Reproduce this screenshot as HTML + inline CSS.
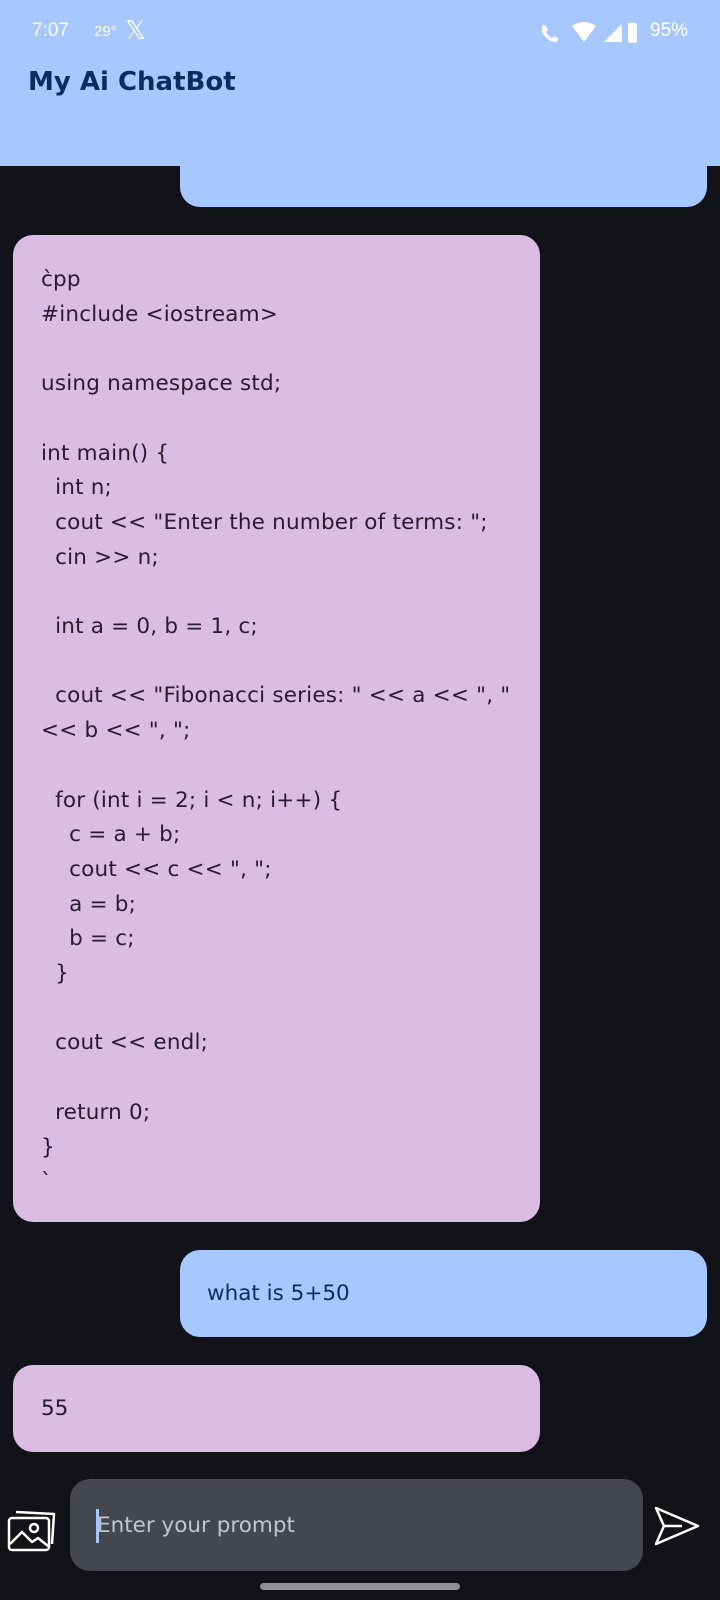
<!DOCTYPE html>
<html><head><meta charset="utf-8"><style>
*{margin:0;padding:0;box-sizing:border-box}
body{width:720px;height:1600px;background:#121318;position:relative;overflow:hidden;font-family:"DejaVu Sans",sans-serif}
.hdr{position:absolute;left:0;top:0;width:720px;height:166px;background:#a6c8ff;z-index:2}
.st{position:absolute;top:20px;font-size:19px;color:#fff;font-family:"Liberation Sans",sans-serif}
.title{position:absolute;left:28px;top:67px;font-size:26px;font-weight:bold;color:#0a2e5c}
.ub{position:absolute;left:180px;width:527px;background:#a6c8ff;border-radius:20px}
.bb{position:absolute;left:13px;width:527px;background:#dbbce2;border-radius:20px}
pre{font-family:"DejaVu Sans",sans-serif;font-size:21.5px;line-height:34.7px;color:#2a1a30;white-space:pre;letter-spacing:0.2px}
</style></head><body>
<div class="hdr">
 <div class="st" style="left:32px">7:07</div>
 <div class="st" style="left:94px;font-size:15px;top:23px">29°</div>
 <div class="st" style="left:125px;font-size:26px;top:15px">𝕏</div>
 <svg style="position:absolute;left:538px;top:20px" width="110" height="26" viewBox="0 0 110 26">
  <path d="M4 6 q2 -2 4 0 l2 4 -2 2 q2 4 6 6 l2 -2 4 2 q1 3 -2 4 q-8 0 -14 -10 z" fill="#fff"/>
  <path d="M34 6 q12 -8 24 0 l-12 16z" fill="#fff"/>
  <path d="M66 22 L84 4 L84 22z" fill="#fff"/>
  <rect x="90" y="3" width="9" height="20" rx="2" fill="#fff"/>
 </svg>
 <div class="st" style="left:650px">95%</div>
 <div class="title">My Ai ChatBot</div>
</div>
<div class="ub" style="top:120px;height:87px"></div>
<div class="bb" style="top:235px;height:987px;padding-top:28px;padding-left:28px">
<pre>c̀pp
#include &lt;iostream&gt;

using namespace std;

int main() {
  int n;
  cout &lt;&lt; "Enter the number of terms: ";
  cin &gt;&gt; n;

  int a = 0, b = 1, c;

  cout &lt;&lt; "Fibonacci series: " &lt;&lt; a &lt;&lt; ", "
&lt;&lt; b &lt;&lt; ", ";

  for (int i = 2; i &lt; n; i++) {
    c = a + b;
    cout &lt;&lt; c &lt;&lt; ", ";
    a = b;
    b = c;
  }

  cout &lt;&lt; endl;

  return 0;
}
`</pre></div>
<div class="ub" style="top:1250px;height:87px"><div style="position:absolute;left:27px;top:31px;font-size:21.5px;color:#0a2e5c">what is 5+50</div></div>
<div class="bb" style="top:1365px;height:87px"><div style="position:absolute;left:28px;top:31px;font-size:21.5px;color:#2a1a30">55</div></div>
<div style="position:absolute;left:70px;top:1479px;width:573px;height:92px;background:#44474e;border-radius:20px">
 <div style="position:absolute;left:26px;top:30px;width:3px;height:34px;background:#a6c8ff"></div>
 <div style="position:absolute;left:27px;top:34px;font-size:21.5px;color:#c4c6cf">Enter your prompt</div>
</div>
<svg style="position:absolute;left:6px;top:1504px" width="52" height="50" viewBox="0 0 52 50">
 <g fill="none" stroke="#fff" stroke-width="2.5" stroke-linejoin="round">
  <path d="M10 8 L48 10 L46 40"/>
  <rect x="3" y="14" width="40" height="32" rx="3"/>
  <circle cx="28" cy="24" r="4"/>
  <path d="M4 40 L16 28 L26 38 L32 34 L42 42"/>
 </g>
</svg>
<svg style="position:absolute;left:652px;top:1504px" width="50" height="44" viewBox="0 0 50 44">
 <path d="M4 4 L46 22 L4 40 L12 22 Z M12 22 H30" fill="none" stroke="#fff" stroke-width="2.5" stroke-linejoin="round"/>
</svg>
<div style="position:absolute;left:260px;top:1583px;width:200px;height:7px;border-radius:4px;background:#909094"></div>
</body></html>
